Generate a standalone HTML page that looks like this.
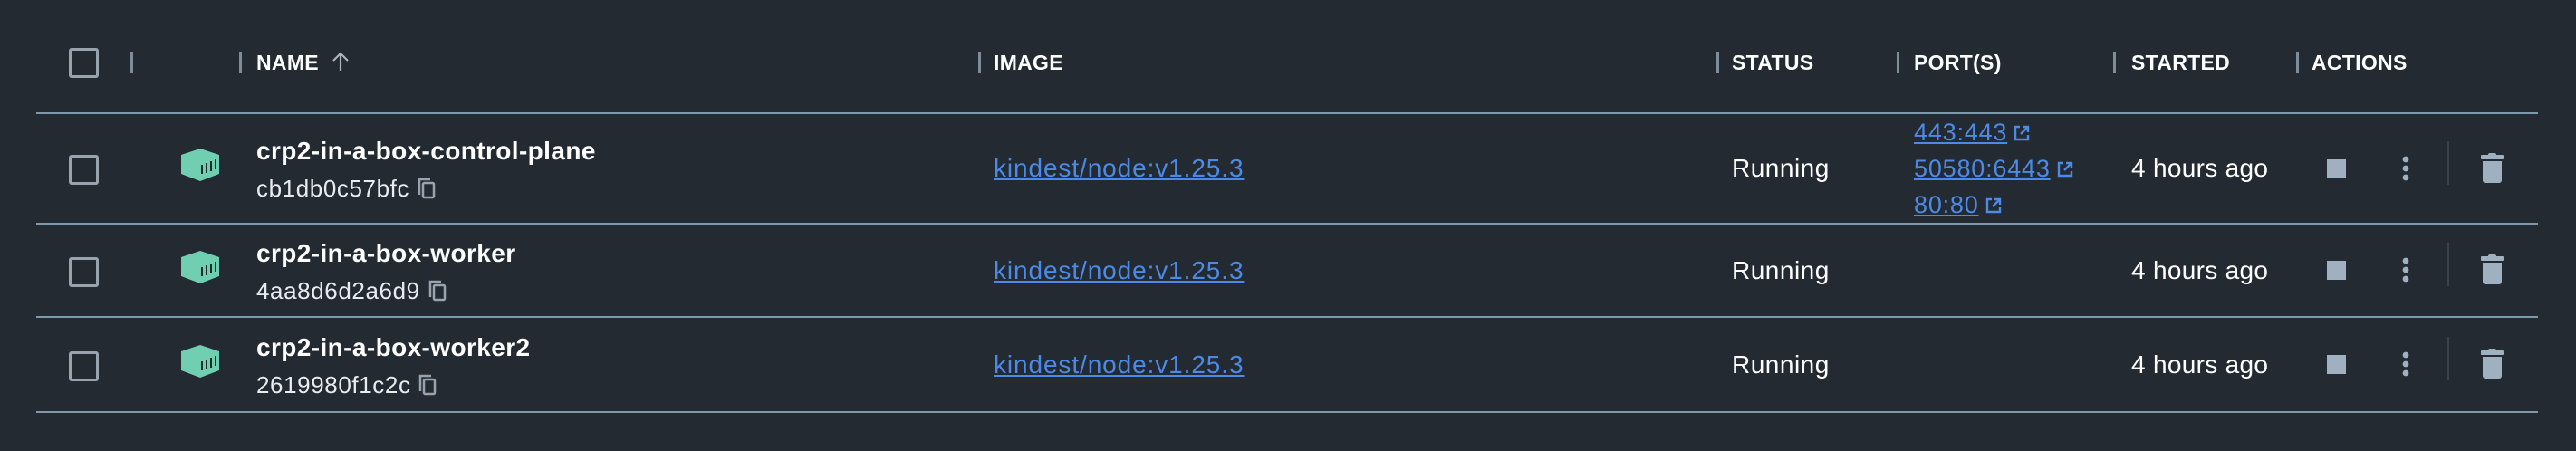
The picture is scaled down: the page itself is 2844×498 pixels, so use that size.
<!DOCTYPE html>
<html><head><meta charset="utf-8"><style>
body{margin:0;width:2844px;height:498px;background:#232a31;position:relative;overflow:hidden;font-family:"Liberation Sans",sans-serif;color:#fff}
.a{position:absolute}
.hd{font-size:23px;font-weight:bold;letter-spacing:0.3px;top:56px;color:#fff}
.dv{width:3px;height:24px;background:#7e8d9a;top:57px}
.ln{left:40px;width:2762px;height:2px;background:#7d97ab}
.cb{width:27px;height:27px;border:3px solid #98a3ae;border-radius:3px;left:76px}
.nm{font-size:28px;font-weight:bold;letter-spacing:0.4px;left:283px}
.id{font-size:26px;letter-spacing:0.6px;left:283px;color:#e8ecef}
.lk{font-size:28px;letter-spacing:0.9px;color:#4c8ae6;text-decoration:underline;left:1097px}
.st{font-size:28px;letter-spacing:0.5px;left:1912px}
.tm{font-size:28px;left:2353px;letter-spacing:0.3px}
.pt{font-size:27px;letter-spacing:0.8px;color:#4c8ae6;left:2113px;white-space:nowrap}
.pt u{text-decoration:underline}
.pt svg{vertical-align:-2px;margin-left:6px}
</style></head><body>
<div class="a cb" style="top:53px"></div>
<div class="a dv" style="left:144px"></div>
<div class="a dv" style="left:264px"></div>
<div class="a dv" style="left:1080px"></div>
<div class="a dv" style="left:1895px"></div>
<div class="a dv" style="left:2094px"></div>
<div class="a dv" style="left:2333px"></div>
<div class="a dv" style="left:2535px"></div>
<div class="a hd" style="left:283px">NAME <svg width="22" height="24" viewBox="0 0 22 24" style="vertical-align:-3px;margin-left:6px"><path d="M11 22V3M3 11l8-8 8 8" stroke="#aab4bd" stroke-width="2.2" fill="none"/></svg></div>
<div class="a hd" style="left:1097px">IMAGE</div>
<div class="a hd" style="left:1912px">STATUS</div>
<div class="a hd" style="left:2113px">PORT(S)</div>
<div class="a hd" style="left:2353px">STARTED</div>
<div class="a hd" style="left:2552px">ACTIONS</div>
<div class="a ln" style="top:124px"></div>
<div class="a ln" style="top:246px"></div>
<div class="a ln" style="top:349px"></div>
<div class="a ln" style="top:454px"></div>

<div class="a cb" style="top:171px"></div>
<div class="a cb" style="top:284px"></div>
<div class="a cb" style="top:388px"></div>

<svg class="a" style="left:198px;top:162px" width="46" height="40" viewBox="0 0 46 40"><path d="M23 2L44 9V30L23 38L2 30V9Z" fill="#6fcfb0"/><path d="M25 30V20M30 29V18M35 27V16M40 25V14" stroke="#1f2a2a" stroke-width="2"/></svg>
<svg class="a" style="left:198px;top:275px" width="46" height="40" viewBox="0 0 46 40"><path d="M23 2L44 9V30L23 38L2 30V9Z" fill="#6fcfb0"/><path d="M25 30V20M30 29V18M35 27V16M40 25V14" stroke="#1f2a2a" stroke-width="2"/></svg>
<svg class="a" style="left:198px;top:379px" width="46" height="40" viewBox="0 0 46 40"><path d="M23 2L44 9V30L23 38L2 30V9Z" fill="#6fcfb0"/><path d="M25 30V20M30 29V18M35 27V16M40 25V14" stroke="#1f2a2a" stroke-width="2"/></svg>

<div class="a nm" style="top:151px">crp2-in-a-box-control-plane</div>
<div class="a id" style="top:193px">cb1db0c57bfc <svg width="22" height="26" viewBox="0 0 22 26" style="vertical-align:-4px"><path d="M3 20V3h12" stroke="#98a3ae" stroke-width="2.5" fill="none"/><rect x="7" y="7" width="12" height="16" rx="1.5" stroke="#98a3ae" stroke-width="2.5" fill="none"/></svg></div>
<div class="a nm" style="top:264px">crp2-in-a-box-worker</div>
<div class="a id" style="top:306px">4aa8d6d2a6d9 <svg width="22" height="26" viewBox="0 0 22 26" style="vertical-align:-4px"><path d="M3 20V3h12" stroke="#98a3ae" stroke-width="2.5" fill="none"/><rect x="7" y="7" width="12" height="16" rx="1.5" stroke="#98a3ae" stroke-width="2.5" fill="none"/></svg></div>
<div class="a nm" style="top:368px">crp2-in-a-box-worker2</div>
<div class="a id" style="top:410px">2619980f1c2c <svg width="22" height="26" viewBox="0 0 22 26" style="vertical-align:-4px"><path d="M3 20V3h12" stroke="#98a3ae" stroke-width="2.5" fill="none"/><rect x="7" y="7" width="12" height="16" rx="1.5" stroke="#98a3ae" stroke-width="2.5" fill="none"/></svg></div>

<div class="a lk" style="top:170px">kindest/node:v1.25.3</div>
<div class="a lk" style="top:283px">kindest/node:v1.25.3</div>
<div class="a lk" style="top:387px">kindest/node:v1.25.3</div>

<div class="a st" style="top:170px">Running</div>
<div class="a st" style="top:283px">Running</div>
<div class="a st" style="top:387px">Running</div>

<div class="a pt" style="top:131px"><u>443:443</u><svg width="20" height="20" viewBox="0 0 20 20"><path d="M8 3H3v14h14v-5M11 3h6v6M17 3L9 11" stroke="#4c8ae6" stroke-width="2.4" fill="none"/></svg></div>
<div class="a pt" style="top:171px"><u>50580:6443</u><svg width="20" height="20" viewBox="0 0 20 20"><path d="M8 3H3v14h14v-5M11 3h6v6M17 3L9 11" stroke="#4c8ae6" stroke-width="2.4" fill="none"/></svg></div>
<div class="a pt" style="top:211px"><u>80:80</u><svg width="20" height="20" viewBox="0 0 20 20"><path d="M8 3H3v14h14v-5M11 3h6v6M17 3L9 11" stroke="#4c8ae6" stroke-width="2.4" fill="none"/></svg></div>

<div class="a tm" style="top:170px">4 hours ago</div>
<div class="a tm" style="top:283px">4 hours ago</div>
<div class="a tm" style="top:387px">4 hours ago</div>

<svg class="a" style="left:2560px;top:150px" width="220" height="300" viewBox="0 0 220 300">
<g id="r"><rect x="9" y="26" width="21" height="21" fill="#9fb0c0"/><circle cx="96" cy="26" r="3.4" fill="#9fb0c0"/><circle cx="96" cy="36" r="3.4" fill="#9fb0c0"/><circle cx="96" cy="46" r="3.4" fill="#9fb0c0"/><rect x="142" y="6" width="2" height="48" fill="#3a434c"/><rect x="179" y="21" width="25" height="5" rx="1" fill="#9fb0c0"/><rect x="187" y="19" width="9" height="4" rx="2" fill="#9fb0c0"/><path d="M181 28h21v21a3 3 0 0 1-3 3h-15a3 3 0 0 1-3-3z" fill="#9fb0c0"/></g>
<use href="#r" y="112"/><use href="#r" y="216"/>
</svg>
</body></html>
